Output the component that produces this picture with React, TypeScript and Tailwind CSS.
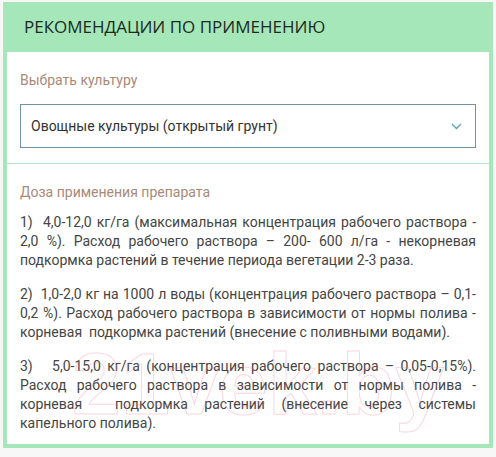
import React from "react";

export default function App() {
  const body = "text-[14px] leading-[19px] text-[#454545] text-justify";
  return (
    <div
      className="w-[496px] h-[457px] bg-[#f7f7f7] pt-[2px] px-[3px] relative overflow-hidden"
      style={{ fontFamily: "Roboto, 'Noto Sans', sans-serif" }}
    >
      <div className="bg-[#a6e7b9] px-[4px] pb-[4px]">
        <div className="h-[50px] flex items-center pl-[17px]">
          <h2
            className="text-[17px] tracking-normal text-[#1b2a1e] font-normal"
            style={{ fontFamily: "'Open Sans', 'Noto Sans', sans-serif" }}
          >
            РЕКОМЕНДАЦИИ ПО ПРИМЕНЕНИЮ
          </h2>
        </div>
        <div className="bg-white">
          <div className="px-[13px] pt-[18px] pb-[15px] border-b border-[#b5e6c3]">
            <div className="text-[14px] leading-[20px] text-[#a88a78]">Выбрать культуру</div>
            <div className="mt-[14px] h-[44px] border border-[#7191ab] flex items-center justify-between pl-[10px] pr-[13px]">
              <span className="text-[14px] text-[#333333]">Овощные культуры (открытый грунт)</span>
              <svg width="11" height="7" viewBox="0 0 11 7" fill="none">
                <path d="M1 1l4.5 4.5L10 1" stroke="#5aa5a8" strokeWidth="1.3" />
              </svg>
            </div>
          </div>
          <div className="px-[13px] pt-[18px] pb-[11px]">
            <div className="text-[14px] leading-[20px] text-[#a88a78]">Доза применения препарата</div>
            <div className="mt-[11px] flex flex-col gap-[15px]">
              <p className={body}>
                1)&nbsp; 4,0-12,0 кг/га (максимальная концентрация рабочего раствора - 2,0 %). Расход рабочего раствора – 200- 600 л/га - некорневая подкормка растений в течение периода вегетации 2-3 раза.
              </p>
              <p className={body}>
                2)&nbsp; 1,0-2,0 кг на 1000 л воды (концентрация рабочего раствора – 0,1-0,2 %). Расход рабочего раствора в зависимости от нормы полива - корневая&nbsp; подкормка растений (внесение с поливными водами).
              </p>
              <p className={body}>
                3)&nbsp;&nbsp; 5,0-15,0 кг/га (концентрация рабочего раствора – 0,05-0,15%). Расход рабочего раствора в зависимости от нормы полива - корневая&nbsp; подкормка растений (внесение через системы капельного полива).
              </p>
            </div>
          </div>
        </div>
      </div>
      <div
        className="absolute left-[72px] top-[340px] text-[88px] font-bold leading-none pointer-events-none select-none"
        style={{
          fontFamily: "'Liberation Sans', sans-serif",
          color: "transparent",
          WebkitTextStroke: "1px rgba(240,120,150,0.3)",
        }}
      >
        21vek.by
      </div>
    </div>
  );
}
